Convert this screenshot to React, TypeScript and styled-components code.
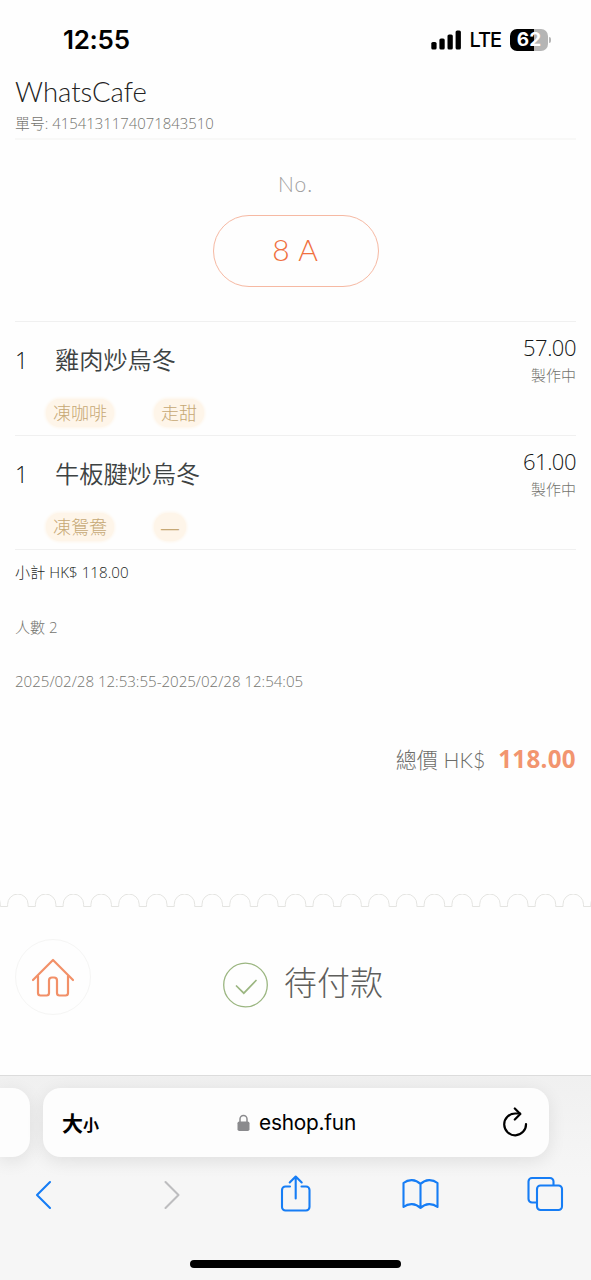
import React from "react";
import styled, { createGlobalStyle } from "styled-components";

const GlobalStyle = createGlobalStyle`
  *, *::before, *::after { box-sizing: border-box; }
  body { margin: 0; background: #fefefe; }
`;

const brandFont = `Lato, "Noto Sans CJK TC", sans-serif`;
const digitFont = `"Open Sans", "Noto Sans CJK TC", sans-serif`;
const systemFont = `Inter, "Noto Sans CJK TC", sans-serif`;

const Screen = styled.div`
  display: flex;
  flex-direction: column;
  width: 591px;
  height: 1280px;
  overflow: hidden;
  background: #fefefe;
  font-family: ${brandFont};
  white-space: nowrap;
`;

const StatusBar = styled.header`
  display: flex;
  align-items: center;
  justify-content: space-between;
  height: 70px;
  padding: 10px 40px 0 63px;
  font-family: ${systemFont};
  color: #000;
`;

const Clock = styled.span`
  font-size: 26px;
  font-weight: 600;
  letter-spacing: -0.3px;
`;

const StatusIcons = styled.div`
  display: flex;
  align-items: center;
`;

const Network = styled.span`
  margin: 0 9px 0 8px;
  font-size: 20px;
  font-weight: 450;
  letter-spacing: -1px;
`;

const Battery = styled.div`
  display: flex;
  align-items: center;
  justify-content: center;
  width: 38px;
  height: 22px;
  border-radius: 7px;
  background: linear-gradient(90deg, #000 62%, #b5b5b5 62%);
  color: #fff;
  font-size: 19px;
  font-weight: 700;
`;

const BatteryTip = styled.i`
  width: 2px;
  height: 6px;
  margin-left: 1px;
  border-radius: 0 2px 2px 0;
  background: #b5b5b5;
`;

const Receipt = styled.main`
  display: flex;
  flex-direction: column;
  height: 825px;
  padding: 0 15px;
`;

const ShopHeader = styled.section`
  height: 70px;
  border-bottom: 2px solid #f8f8f7;
`;

const ShopName = styled.h1`
  margin: 0;
  padding-top: 4px;
  font-size: 27.5px;
  font-weight: 300;
  line-height: 36px;
  letter-spacing: 0;
  color: #222;
`;

const OrderNumber = styled.div`
  font-family: ${digitFont};
  font-size: 14.9px;
  font-weight: 300;
  line-height: 26px;
  color: #74746f;
`;

const TableSection = styled.section`
  display: flex;
  flex-direction: column;
  align-items: center;
  height: 182px;
  border-bottom: 1px solid #f0f0f0;
`;

const TableLabel = styled.div`
  margin-top: 31px;
  font-size: 21px;
  font-weight: 300;
  line-height: 26px;
  letter-spacing: 1px;
  color: #a0a09e;
`;

const TableBadge = styled.div`
  display: flex;
  align-items: center;
  justify-content: center;
  width: 166px;
  height: 72px;
  margin-top: 18px;
  padding-bottom: 3px;
  border: 1px solid #f6b9a3;
  border-radius: 36px;
  font-size: 30px;
  font-weight: 300;
  letter-spacing: 0.8px;
  color: #f0703f;
`;

const Item = styled.article`
  height: 114px;
  border-bottom: 1px solid #f0f0f0;
`;

const ItemMain = styled.div`
  display: grid;
  grid-template-columns: 40px 1fr auto;
  height: 76px;
`;

const Quantity = styled.span`
  padding-top: 21px;
  font-family: ${digitFont};
  font-size: 23px;
  font-weight: 300;
  line-height: 34px;
  color: #101414;
`;

const ItemName = styled.h2`
  margin: 0;
  padding-top: 21px;
  font-size: 24.2px;
  font-weight: 350;
  line-height: 34px;
  color: #3d4242;
`;

const PriceColumn = styled.div`
  display: flex;
  flex-direction: column;
  align-items: flex-end;
  padding-top: 11px;
`;

const Price = styled.span`
  font-family: ${digitFont};
  font-size: 22px;
  font-weight: 300;
  line-height: 29px;
  letter-spacing: -0.5px;
  color: #141616;
`;

const ItemStatus = styled.span`
  font-size: 15px;
  font-weight: 300;
  line-height: 27px;
  color: #74746f;
`;

const Tags = styled.div`
  display: flex;
  gap: 40px;
  padding-left: 31px;
`;

const Tag = styled.span`
  height: 28px;
  margin-top: 1px;
  padding: 0 7px;
  border-radius: 14px;
  background: #fef5e9;
  box-shadow: 0 0 3px 1px #fef5e9;
  font-family: "Liberation Sans", "Noto Sans CJK TC", sans-serif;
  font-size: 18px;
  font-weight: 300;
  line-height: 31px;
  color: #c6a875;
`;

const Detail = styled.div<{ $strong?: boolean }>`
  height: 54.6px;
  font-family: ${digitFont};
  font-size: 15.1px;
  font-weight: 300;
  line-height: 45px;
  letter-spacing: ${(p) => (p.$strong ? "0.06px" : "-0.02px")};
  color: ${(p) => (p.$strong ? "#1c1e1c" : "#74746f")};
`;

const Total = styled.div`
  display: flex;
  align-items: center;
  justify-content: flex-end;
  gap: 13px;
  height: 60px;
  margin-top: 15px;
`;

const TotalLabel = styled.span`
  font-size: 21.1px;
  font-weight: 300;
  color: #6c6c69;
`;

const TotalAmount = styled.strong`
  font-family: ${digitFont};
  font-size: 24.2px;
  font-weight: 700;
  letter-spacing: 0.3px;
  color: #f2956f;
`;

const PaymentBar = styled.section`
  display: flex;
  align-items: flex-start;
  height: 167px;
  padding: 31px 15px 0;
`;

const HomeButton = styled.button`
  display: flex;
  align-items: center;
  justify-content: center;
  width: 76px;
  height: 76px;
  padding: 1px 0 0;
  border: 1.5px solid #f5f5f4;
  border-radius: 50%;
  background: #fefefe;
`;

const PaymentStatus = styled.div`
  display: flex;
  align-items: center;
  gap: 16px;
  margin: 23px 0 0 132px;
  font-size: 33px;
  font-weight: 300;
  line-height: 40px;
  color: #5e5e5c;
`;

const StatusText = styled.span`
  padding-bottom: 6px;
`;

const Browser = styled.footer`
  display: flex;
  flex-direction: column;
  height: 205px;
  border-top: 1px solid #dcdcdc;
  background: linear-gradient(#f0f0f0, #f6f6f6 50%);
  font-family: ${systemFont};
`;

const AddressRow = styled.div`
  display: flex;
  gap: 13px;
  padding-top: 12px;
`;

const Card = styled.div`
  height: 69px;
  background: #fdfdfd;
  box-shadow: 0 4px 18px rgba(0, 0, 0, 0.09);
`;

const PreviousTab = styled(Card)`
  width: 30px;
  border-radius: 0 18px 18px 0;
`;

const AddressBar = styled(Card)`
  display: grid;
  grid-template-columns: 1fr auto 1fr;
  align-items: center;
  width: 506px;
  padding: 0 21px 0 19px;
  border-radius: 18px;
  color: #000;
`;

const TextSize = styled.span`
  padding-bottom: 2px;
  font-size: 21px;
  font-weight: 700;

  small { font-size: 16px; }
`;

const Domain = styled.span`
  display: flex;
  align-items: center;
  gap: 9px;
  padding-left: 3px;
  font-size: 20.8px;
  letter-spacing: -0.2px;
`;

const Reload = styled.span`
  display: flex;
  justify-content: flex-end;
  padding-bottom: 2px;
`;

const Toolbar = styled.nav`
  display: flex;
  justify-content: space-between;
  height: 76px;
  padding: 15px 25px 0 23px;
`;

const HomeIndicator = styled.div`
  width: 211px;
  height: 8px;
  margin: 27px auto 0;
  border-radius: 4px;
  background: #000;
`;

const items = [
  { name: "雞肉炒烏冬", price: "57.00", tags: ["凍咖啡", "走甜"] },
  { name: "牛板腱炒烏冬", price: "61.00", tags: ["凍鴛鴦", "—"] },
];

const scallops =
  "M-27.8 12.5" +
  Array.from({ length: 23 }, () => "h7.3v-2.2a10.25 10.25 0 0 1 20.5 0v2.2").join("");

const ToolIcon = ({ color = "#167df5", d }: { color?: string; d: string }) => (
  <svg width="40" height="40" viewBox="0 0 40 40" fill="none" stroke={color} strokeWidth="2.1" strokeLinecap="round" strokeLinejoin="round">
    <path d={d} />
  </svg>
);

export default function App() {
  return (
    <Screen>
      <GlobalStyle />
      <StatusBar>
        <Clock>12:55</Clock>
        <StatusIcons>
          <svg width="30" height="20" viewBox="0 0 30 20">
            <rect x="0.3" y="12" width="5.3" height="7.5" rx="1.6" />
            <rect x="8.4" y="8.5" width="5.3" height="11" rx="1.6" />
            <rect x="16.5" y="4.5" width="5.3" height="15" rx="1.6" />
            <rect x="24.6" y="0.5" width="5.3" height="19" rx="1.6" />
          </svg>
          <Network>LTE</Network>
          <Battery>62</Battery>
          <BatteryTip />
        </StatusIcons>
      </StatusBar>

      <Receipt>
        <ShopHeader>
          <ShopName>WhatsCafe</ShopName>
          <OrderNumber>單号: 4154131174071843510</OrderNumber>
        </ShopHeader>
        <TableSection>
          <TableLabel>No.</TableLabel>
          <TableBadge>8 A</TableBadge>
        </TableSection>
        {items.map((item) => (
          <Item key={item.name}>
            <ItemMain>
              <Quantity>1</Quantity>
              <ItemName>{item.name}</ItemName>
              <PriceColumn>
                <Price>{item.price}</Price>
                <ItemStatus>製作中</ItemStatus>
              </PriceColumn>
            </ItemMain>
            <Tags>
              {item.tags.map((tag) => (
                <Tag key={tag}>{tag}</Tag>
              ))}
            </Tags>
          </Item>
        ))}
        <Detail $strong>小計 HK$ 118.00</Detail>
        <Detail>人數 2</Detail>
        <Detail>2025/02/28 12:53:55-2025/02/28 12:54:05</Detail>
        <Total>
          <TotalLabel>總價 HK$</TotalLabel>
          <TotalAmount>118.00</TotalAmount>
        </Total>
      </Receipt>

      <svg width="591" height="14" viewBox="0 0 591 14" fill="none" stroke="#e4e4e1" strokeWidth="1">
        <path d={scallops} />
      </svg>

      <PaymentBar>
        <HomeButton aria-label="home">
          <svg width="44" height="40" viewBox="0 0 44 40" fill="none" stroke="#f29068" strokeWidth="2.2" strokeLinecap="round" strokeLinejoin="round">
            <path d="M2 22 22 2 42 22" />
            <path d="M7 18v17a2.5 2.5 0 0 0 2.5 2.5h6A2.5 2.5 0 0 0 18 35V22.5a3 3 0 0 1 3-3h2a3 3 0 0 1 3 3V35a2.5 2.5 0 0 0 2.5 2.5h6A2.5 2.5 0 0 0 37 35V18" />
          </svg>
        </HomeButton>
        <PaymentStatus>
          <svg width="45" height="46" viewBox="0 0 45 46" fill="none" stroke="#9bb681">
            <circle cx="22.5" cy="23" r="21.8" strokeWidth="1.3" />
            <path d="m13.5 24 7.3 7.2L33 18.5" strokeWidth="1.7" strokeLinecap="round" />
          </svg>
          <StatusText>待付款</StatusText>
        </PaymentStatus>
      </PaymentBar>

      <Browser>
        <AddressRow>
          <PreviousTab />
          <AddressBar>
            <TextSize>大<small>小</small></TextSize>
            <Domain>
              <svg width="13" height="18" viewBox="0 0 13 18">
                <rect x="0.5" y="7.5" width="12" height="9.5" rx="1.8" fill="#8a8a8d" />
                <path d="M3 8V5a3.5 3.5 0 0 1 7 0v3" fill="none" stroke="#8a8a8d" strokeWidth="1.5" />
              </svg>
              eshop.fun
            </Domain>
            <Reload>
              <svg width="26" height="30" viewBox="0 0 26 30" fill="none" stroke="#000" strokeWidth="2.2" strokeLinecap="round" strokeLinejoin="round">
                <path d="M24 17A10.9 10.9 0 1 1 13.1 6.5h5" />
                <path d="m12.8 1.5 5.5 5.5-5.5 5.5" />
              </svg>
            </Reload>
          </AddressBar>
        </AddressRow>
        <Toolbar>
          <ToolIcon d="M27 10 14 23l13 13" />
          <ToolIcon color="#bdbdbf" d="M16.5 10 29.5 23 16.5 36" />
          <ToolIcon d="M15 14.5H10.5A3.5 3.5 0 0 0 7 18v17A3.5 3.5 0 0 0 10.5 38.5h20.5a3.5 3.5 0 0 0 3.5-3.5V18A3.5 3.5 0 0 0 31 14.5H26.5M20.7 26.5V4.5m-6 6L20.7 4.5l6 6" />
          <ToolIcon d="M20.5 12C15.5 7 8.5 7 3.5 11v24c5-4 12-4 17 1 5-5 12-5 17-1V11c-5-4-12-4-17 1v24" />
          <ToolIcon d="M11 30.5H6A3.5 3.5 0 0 1 2.5 27V9.5A3.5 3.5 0 0 1 6 6h18A3.5 3.5 0 0 1 27.5 9.5V13.5M14.5 13.5h18A3.5 3.5 0 0 1 36 17v17.5A3.5 3.5 0 0 1 32.5 38H14.5A3.5 3.5 0 0 1 11 34.5V17A3.5 3.5 0 0 1 14.5 13.5Z" />
        </Toolbar>
        <HomeIndicator />
      </Browser>
    </Screen>
  );
}
